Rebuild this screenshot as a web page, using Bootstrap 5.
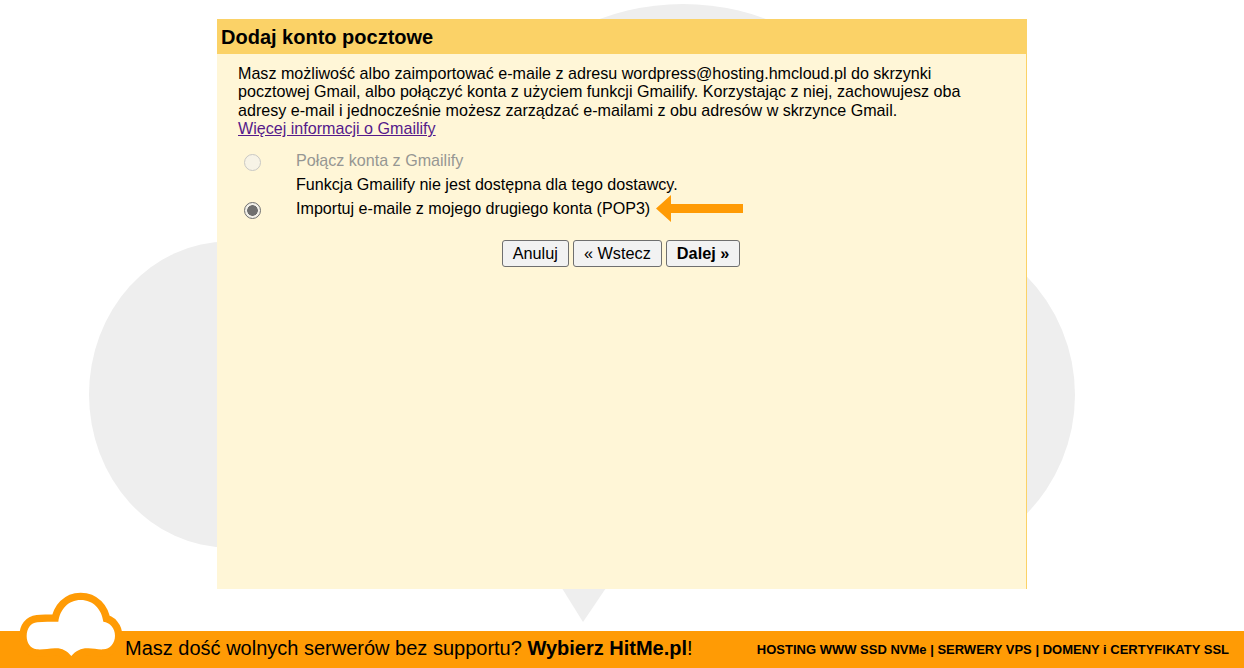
<!DOCTYPE html>
<html lang="pl">
<head>
  <meta charset="UTF-8" />
  <meta name="viewport" content="width=device-width, initial-scale=1.0" />
  <title>Dodaj konto pocztowe</title>
  <link href="https://cdn.jsdelivr.net/npm/bootstrap@5.3.0/dist/css/bootstrap.min.css" rel="stylesheet" />
  <style>
    html, body { height: 100%; }
    body { font-family: "Liberation Sans", Arial, sans-serif; color: #000; background: #fff; overflow: hidden; }
    .bg-cloud { position: absolute; left: 0; top: 0; width: 1244px; height: 668px; }
    .logo-cloud { position: absolute; left: 0; top: 580px; width: 300px; height: 88px; }
    .stage { height: 631px; padding-top: 19px; position: relative; }
    .mail-panel { width: 810px; height: 570px; margin-left: 217px; background: #fff6d7; border-right: 1px solid #fbd267; position: relative; }
    .mail-title { height: 35px; background: #fbd267; font-size: 20px; font-weight: 700; line-height: 37px; padding-left: 4px; margin: 0; }
    .mail-body { padding: 10px 22px 0 21px; font-size: 16.1px; line-height: 18.4px; }
    .mail-body a { color: #551a8b; }
    .opt-row { display: flex; }
    .opt-radio { width: 58px; padding-left: 6px; flex-shrink: 0; }
    .opt-radio .form-check-input { width: 17px; height: 17px; margin: 3px 0 0; background-color: #f2f0e9; border: 1px solid #6f6f6f; background-image: none; opacity: 1; display: block; }
    .opt-radio .form-check-input:checked { background-color: #f2f0e9; background-image: radial-gradient(circle, #6f6f6f 0 5px, transparent 5.6px); border-color: #6f6f6f; }
    .opt-radio .form-check-input:disabled { border-color: #c9c8c4; background-color: #f7f3e6; }
    .opt-off { color: #969693; }
    .pointer-arrow { position: absolute; left: 439px; top: 176px; width: 87px; height: 27px; }
    .mail-btn { font-family: inherit; font-size: 16.3px; line-height: 18px; color: #000; background: #f2f2f2; border: 1px solid #6f6f6f; border-radius: 3px; padding: 3px 10px 4px; height: 27px; }
    .mail-btn:hover { background: #e9e9e9; color: #000; border-color: #6f6f6f; }
    .promo-bar { height: 37px; background: #ff9b05; padding: 0 15px 0 125px; position: relative; }
    .promo-main { font-size: 20px; padding-bottom: 3px; }
    .promo-links { font-size: 13px; font-weight: 700; }
  </style>
</head>
<body>

  <!-- chmura w tle -->
  <svg class="bg-cloud" viewBox="0 0 1244 668" aria-hidden="true">
    <g fill="#eeeeee">
      <path d="M575 30 A237 237 0 0 1 791 30 Z"/>
      <ellipse cx="228" cy="394.5" rx="139" ry="153"/>
      <circle cx="905" cy="395" r="170"/>
      <polygon points="560,585 608,585 583,622"/>
    </g>
  </svg>

  <div class="stage">
    <div class="mail-panel">
      <h1 class="mail-title">Dodaj konto pocztowe</h1>
      <div class="mail-body">
        <p class="mb-0">Masz możliwość albo zaimportować e-maile z adresu wordpress@hosting.hmcloud.pl do skrzynki<br>pocztowej Gmail, albo połączyć konta z użyciem funkcji Gmailify. Korzystając z niej, zachowujesz oba<br>adresy e-mail i jednocześnie możesz zarządzać e-mailami z obu adresów w skrzynce Gmail.<br><a href="#">Więcej informacji o Gmailify</a></p>

        <div class="opt-row" style="margin-top: 13px">
          <div class="opt-radio"><input class="form-check-input" type="radio" name="tryb" disabled /></div>
          <div class="opt-off">Połącz konta z Gmailify</div>
        </div>
        <div class="opt-row" style="margin-top: 4px">
          <div class="opt-radio"></div>
          <div>Funkcja Gmailify nie jest dostępna dla tego dostawcy.</div>
        </div>
        <div class="opt-row" style="margin-top: 6px">
          <div class="opt-radio"><input class="form-check-input" type="radio" name="tryb" checked /></div>
          <div>Importuj e-maile z mojego drugiego konta (POP3)</div>
        </div>

        <div class="d-flex justify-content-center gap-1" style="margin-top: 21px">
          <button type="button" class="btn mail-btn">Anuluj</button>
          <button type="button" class="btn mail-btn">« Wstecz</button>
          <button type="button" class="btn mail-btn fw-bold">Dalej »</button>
        </div>
      </div>

      <svg class="pointer-arrow" viewBox="0 0 87 27" aria-hidden="true">
        <polygon points="0,13.5 15,0 15,9 87,9 87,18 15,18 15,27" fill="#ff9b05"/>
      </svg>
    </div>
  </div>

  <div class="promo-bar d-flex align-items-center justify-content-between">
    <div class="promo-main">Masz dość wolnych serwerów bez supportu? <strong>Wybierz HitMe.pl</strong>!</div>
    <div class="promo-links">HOSTING WWW SSD NVMe | SERWERY VPS | DOMENY i CERTYFIKATY SSL</div>
  </div>

  <!-- logo -->
  <svg class="logo-cloud" viewBox="0 0 900 264" aria-hidden="true">
    <path d="M214 228 C200 212 185 204 165 205 C145 206 130 209 110 208 C90 205 80 188 80 168 C80 145 92 129 112 127 C130 125 155 125 175 125 C180 88 205 60 242 60 C280 60 305 88 310 125 C330 127 345 145 345 167 C345 190 330 207 310 208 C295 209 280 205 265 205 C245 204 228 212 214 228 Z" fill="#fff" stroke="#ff9b05" stroke-width="44" stroke-linejoin="round" paint-order="stroke"/>
  </svg>

</body>
</html>
